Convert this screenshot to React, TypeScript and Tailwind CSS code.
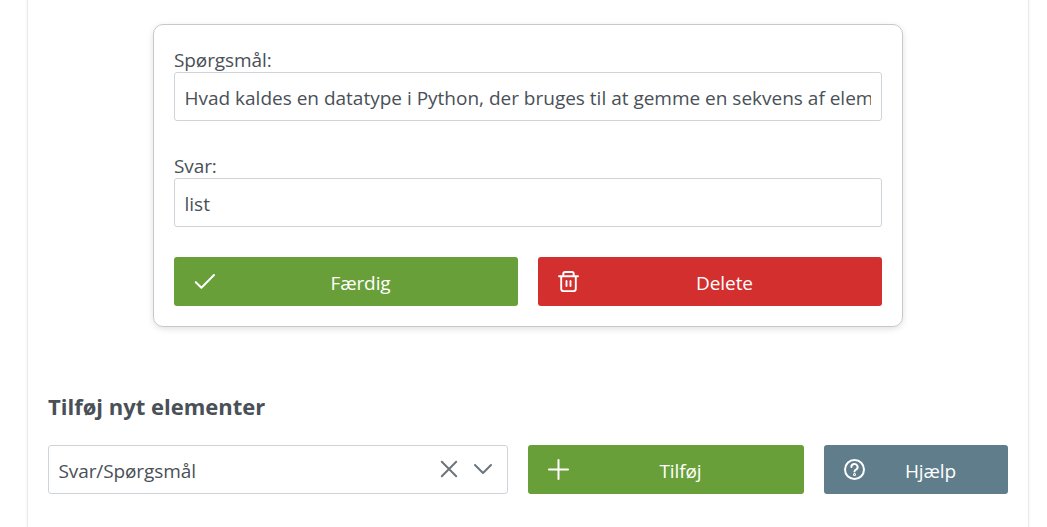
import type { ReactNode } from "react";

const iconProps = {
  width: 21,
  height: 21,
  viewBox: "0 0 21 21",
  fill: "none",
  stroke: "currentColor",
  strokeLinecap: "round" as const,
  strokeLinejoin: "round" as const,
};

const CheckIcon = () => (
  <svg {...iconProps} strokeWidth="2"><path d="M1.8 11.2 7.4 16.8 20 4" /></svg>
);
const TrashIcon = () => (
  <svg {...iconProps} strokeWidth="1.9">
    <path d="M1 5.3h19M3.2 5.3v12.4q0 2.4 2.4 2.4h9.8q2.4 0 2.4-2.4V5.3M5.3 5V2.8Q5.3 1 7.1 1h6.8q1.8 0 1.8 1.8V5M8.5 10v5M12.5 10v5" />
  </svg>
);
const PlusIcon = () => (
  <svg {...iconProps} strokeWidth="2"><path d="M10.5 1v19M1 10.5h19" /></svg>
);
const HelpIcon = () => (
  <svg {...iconProps} strokeWidth="2">
    <circle cx="10.5" cy="10.5" r="9.5" />
    <path d="M7.4 8a3.1 3 0 1 1 4.7 2.5c-1.1.7-1.6 1-1.6 1.9" />
    <circle cx="10.5" cy="15.5" r=".5" />
  </svg>
);

function Button({ icon, color, children }: { icon: ReactNode; color: string; children: ReactNode }) {
  return (
    <button className={`flex h-[49px] w-full items-center rounded-[3px] px-5 text-white ${color}`}>
      <span className="-mt-px shrink-0">{icon}</span>
      <span className="flex-1 pt-[3px] pl-2 text-center">{children}</span>
    </button>
  );
}

function Field({ label, value }: { label: string; value: string }) {
  return (
    <label className="flex flex-col">
      <span className="h-6 leading-6">{label}</span>
      <input
        readOnly
        value={value}
        className="h-[49px] w-full rounded-[3px] border border-[#ced4da] bg-white pt-[3px] pr-[10px] pl-[9.5px] tracking-[-0.005px] outline-none"
      />
    </label>
  );
}

export default function App() {
  return (
    <div className="h-[527px] overflow-hidden bg-white pl-[27px] font-['Open_Sans','Noto_Sans',sans-serif] text-[19px] tracking-[-0.1px] text-[#495057]">
      <main className="flex h-full w-[1002px] flex-col border-x border-[#e9e9ec] px-5 pt-6 shadow-[0_0_3px_rgba(0,0,0,0.06)]">
        <section className="mx-auto h-[303px] w-[750px] rounded-[10px] border border-[#c8c8c8] px-5 pt-[23px] shadow-[0_2px_6px_rgba(0,0,0,0.12)]">
          <div className="flex flex-col gap-[33px]">
            <Field label="Spørgsmål:" value="Hvad kaldes en datatype i Python, der bruges til at gemme en sekvens af elementer?" />
            <Field label="Svar:" value="list" />
          </div>
          <div className="mt-[30px] grid grid-cols-2 gap-5">
            <Button icon={<CheckIcon />} color="bg-[#689f38]">Færdig</Button>
            <Button icon={<TrashIcon />} color="bg-[#d32f2f]">Delete</Button>
          </div>
        </section>
        <h2 className="mt-[64px] text-[22px] leading-[30px] font-bold tracking-[0px]">Tilføj nyt elementer</h2>
        <div className="mt-[24px] grid grid-cols-[460px_276px_184px] gap-5">
          <div className="flex h-[49px] items-center rounded-[3px] border border-[#ced4da] pr-[10px] pl-[9.5px]">
            <span className="flex-1 pt-[3px]">Svar/Spørgsmål</span>
            <svg width="18" height="18" viewBox="0 0 18 18" className="-mt-px mr-4 text-[#6c757d]" fill="none" stroke="currentColor" strokeWidth="2" strokeLinecap="round">
              <path d="m1.8 1.8 14.4 14.4m0-14.4-14.4 14.4" />
            </svg>
            <svg width="18" height="18" viewBox="0 0 18 18" className="-mt-px mr-[5px] text-[#6c757d]" fill="none" stroke="currentColor" strokeWidth="2" strokeLinecap="round" strokeLinejoin="round">
              <path d="m1 5 8 8 8-8" />
            </svg>
          </div>
          <Button icon={<PlusIcon />} color="bg-[#689f38]">Tilføj</Button>
          <Button icon={<HelpIcon />} color="bg-[#607d8b]">Hjælp</Button>
        </div>
      </main>
    </div>
  );
}
